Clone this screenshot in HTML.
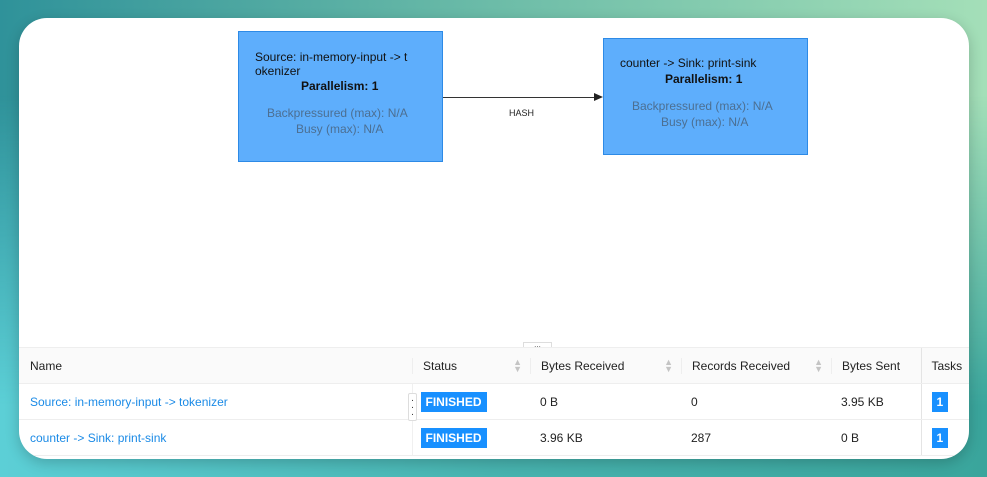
<!DOCTYPE html>
<html><head><style>
*{margin:0;padding:0;box-sizing:border-box}
body{width:987px;height:477px;overflow:hidden;font-family:"Liberation Sans",sans-serif;
background:linear-gradient(90deg,#2f929a 0%,#6cbca8 50%,#a4dfb8 100%);position:relative}
.bg2{position:absolute;inset:0;background:linear-gradient(90deg,#5ccfd6 0%,#48b4b0 50%,#3aa59c 100%);-webkit-mask-image:linear-gradient(180deg,transparent 20%,#000 85%);mask-image:linear-gradient(180deg,transparent 20%,#000 85%)}
.card{position:absolute;left:19px;top:18px;width:950px;height:441px;background:#fff;border-radius:28px;overflow:hidden;box-shadow:0 4px 14px rgba(0,0,0,.2)}
.box{position:absolute;background:#5eaefc;border:1px solid #2d8ae6;font-size:12px;color:#111}
.g{color:#4c6f92}
.t{position:absolute;white-space:nowrap}
table{position:absolute;left:0;top:329px;border-collapse:collapse;font-size:12px;width:950px}
th{background:#fafafa;font-weight:normal;color:#222;text-align:left;height:36px;padding-left:11px;border-bottom:1px solid #eee;border-top:1px solid #eee;position:relative}
td{height:36px;padding-left:8px;border-bottom:1px solid #eee;color:#222}
.lnk{color:#1a8ae6;padding-left:11px}
.fin{background:#1890ff;color:#fff;font-weight:bold;padding:3px 5px;font-size:12px}
.one{background:#1890ff;color:#fff;font-weight:bold;padding:3px 5px}
.sort{position:absolute;right:8px;top:11px;font-size:9px;line-height:7px;color:#c4c4c4}
.sep{position:absolute;left:0;top:10px;height:16px;border-left:1px solid #eee}
</style></head><body><div class="bg2"></div>
<div class="card">
 <div class="box" style="left:219px;top:13px;width:205px;height:131px">
  <div class="t" style="left:16px;top:18px">Source: in-memory-input -&gt; t</div>
  <div class="t" style="left:16px;top:32px">okenizer</div>
  <div class="t" style="left:62px;top:47px;font-weight:bold">Parallelism: 1</div>
  <div class="t g" style="left:28px;top:74px">Backpressured (max): N/A</div>
  <div class="t g" style="left:57px;top:90px">Busy (max): N/A</div>
 </div>
 <div class="box" style="left:584px;top:20px;width:205px;height:117px">
  <div class="t" style="left:16px;top:17px">counter -&gt; Sink: print-sink</div>
  <div class="t" style="left:61px;top:33px;font-weight:bold">Parallelism: 1</div>
  <div class="t g" style="left:28px;top:60px">Backpressured (max): N/A</div>
  <div class="t g" style="left:57px;top:76px">Busy (max): N/A</div>
 </div>
 <div style="position:absolute;left:424px;top:79px;width:152px;border-top:1px solid #333"></div>
 <div style="position:absolute;left:575px;top:75px;border-left:9px solid #222;border-top:4px solid transparent;border-bottom:4px solid transparent"></div>
 <div class="t" style="left:490px;top:90px;font-size:9px;color:#222">HASH</div>
 <div style="position:absolute;left:504px;top:324px;width:29px;height:8px;border:1px solid #ddd;border-bottom:none;font-size:8px;text-align:center;line-height:4px;color:#555;background:#fff">...</div>
 <table>
  <tr><th style="width:393px">Name</th><th style="width:118px"><span class="sep"></span>Status<span class="sort">▲<br>▼</span></th><th style="width:151px"><span class="sep"></span>Bytes Received<span class="sort">▲<br>▼</span></th><th style="width:150px"><span class="sep"></span>Records Received<span class="sort">▲<br>▼</span></th><th style="width:90px"><span class="sep"></span>Bytes Sent</th><th style="border-left:1px solid #e4e4e4;box-shadow:-4px 0 6px rgba(0,0,0,.06);padding-left:10px">Tasks</th></tr>
  <tr><td class="lnk">Source: in-memory-input -&gt; tokenizer</td><td style="border-left:1px solid #f0f0f0"><span class="fin">FINISHED</span></td><td style="padding-left:10px">0 B</td><td style="padding-left:10px">0</td><td style="padding-left:10px">3.95 KB</td><td style="border-left:1px solid #e4e4e4;padding-left:10px"><span class="one">1</span></td></tr>
  <tr><td class="lnk">counter -&gt; Sink: print-sink</td><td style="border-left:1px solid #f0f0f0"><span class="fin">FINISHED</span></td><td style="padding-left:10px">3.96 KB</td><td style="padding-left:10px">287</td><td style="padding-left:10px">0 B</td><td style="border-left:1px solid #e4e4e4;padding-left:10px"><span class="one">1</span></td></tr>
 </table>
 <div style="position:absolute;left:389px;top:375px;width:9px;height:28px;border:1px solid #ddd;border-radius:2px;background:#fff;font-size:10px;line-height:7px;text-align:center;color:#333;padding-top:3px">·<br>·<br>·</div>
</div>
</body></html>
